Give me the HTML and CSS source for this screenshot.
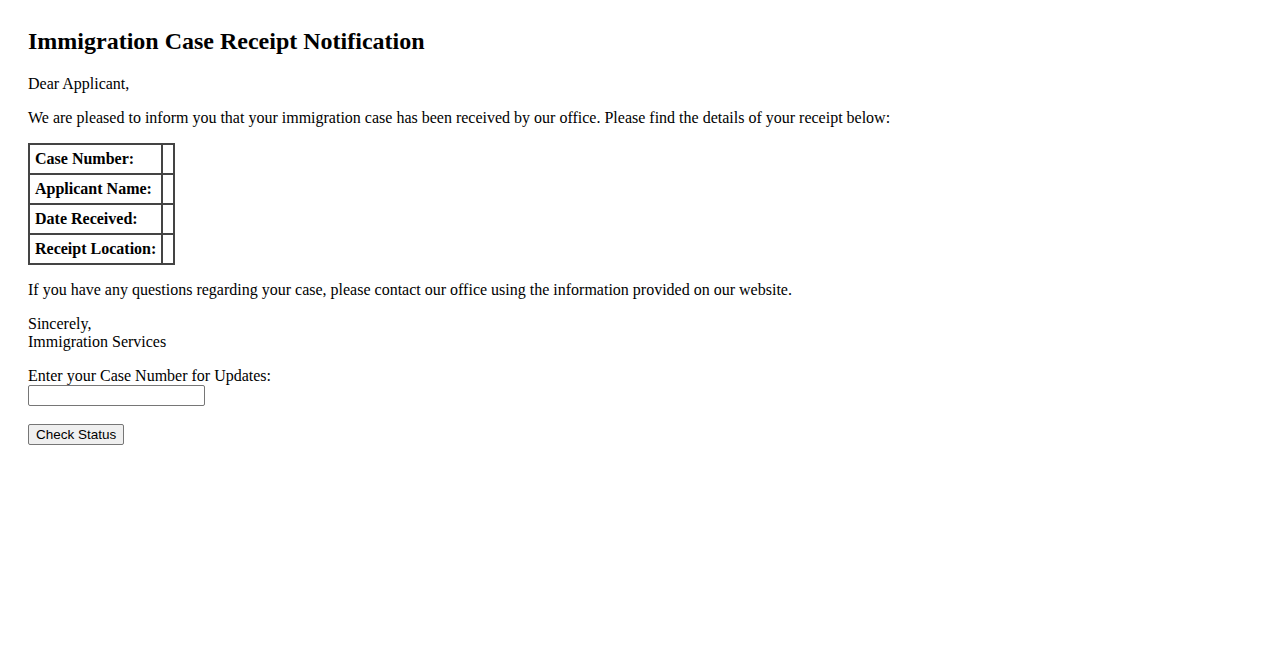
FILE: index.html
```html
<!DOCTYPE html>
<html>
<head>
    <title>Immigration Case Receipt Notification</title>
    <link rel="stylesheet" href="styles.css">
</head>
<body>
    <h2>Immigration Case Receipt Notification</h2>
    <p>Dear Applicant,</p>
    <p>We are pleased to inform you that your immigration case has been received by our office. Please find the details of your receipt below:</p>

    <table class="receipt">
        <tr>
            <th>Case Number:</th>
            <td></td>
        </tr>
        <tr>
            <th>Applicant Name:</th>
            <td></td>
        </tr>
        <tr>
            <th>Date Received:</th>
            <td></td>
        </tr>
        <tr>
            <th>Receipt Location:</th>
            <td></td>
        </tr>
    </table>

    <p>If you have any questions regarding your case, please contact our office using the information provided on our website.</p>
    <p>Sincerely,<br>Immigration Services</p>

    <form class="status-form" onsubmit="return false;">
        <label for="caseNumber">Enter your Case Number for Updates:</label><br>
        <input type="text" id="caseNumber" name="caseNumber"><br><br>
        <button type="submit">Check Status</button>
    </form>
</body>
</html>
```

FILE: styles.css
```css
body {
    font-family: "Liberation Serif", "Times New Roman", serif;
    font-size: 16px;
    margin: 8px;
    padding: 20px;
    color: #000;
    background: #fff;
}
h2 {
    font-size: 24px;
    margin: 0 0 20px 0;
}
p {
    margin: 16px 0;
}
.receipt {
    border: 1px solid #444;
    border-spacing: 0;
}
.receipt th,
.receipt td {
    border: 1px solid #444;
    padding: 5px;
    text-align: left;
}
.status-form {
    margin: 16px 0;
}
.status-form input {
    font-family: "Liberation Sans", Arial, sans-serif;
    font-size: 13.33px;
    width: 177px;
    height: 21px;
    padding: 1px 2px;
    box-sizing: border-box;
    border: 1px solid #767676;
    border-radius: 2px;
}
.status-form button {
    font-family: "Liberation Sans", Arial, sans-serif;
    font-size: 13.5px;
    padding: 1px 7px;
    height: 21px;
    background: #efefef;
    border: 1px solid #767676;
    border-radius: 2px;
    color: #000;
}
```
